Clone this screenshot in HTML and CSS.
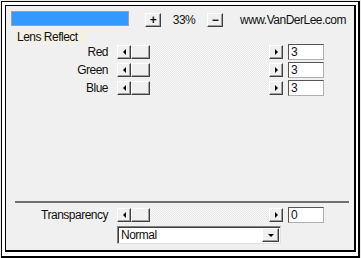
FILE: index.html
```html
<!DOCTYPE html>
<html lang="en">
<head>
    <meta charset="UTF-8">
    <title>Lens Reflect</title>
    <link rel="stylesheet" href="styles.css">
</head>
<body>

<div class="frame">
    <div class="panel">
        <!-- Preview bar -->
        <div class="topbar">
            <div class="progress"></div>
            <div class="btn btn-zoom btn-plus">+</div>
            <span class="zoom-value">33%</span>
            <div class="btn btn-zoom">&minus;</div>
            <span class="site">www.VanDerLee.com</span>
        </div>

        <!-- Lens Reflect group -->
        <div class="group">
            <div class="group-title">Lens Reflect</div>

            <div class="row">
                <span class="row-label">Red</span>
                <div class="slider">
                    <div class="btn arrow-btn"><span class="arrow-left"></span></div>
                    <div class="btn thumb"></div>
                    <div class="track"></div>
                    <div class="btn arrow-btn"><span class="arrow-right"></span></div>
                </div>
                <div class="value">3</div>
            </div>

            <div class="row">
                <span class="row-label">Green</span>
                <div class="slider">
                    <div class="btn arrow-btn"><span class="arrow-left"></span></div>
                    <div class="btn thumb"></div>
                    <div class="track"></div>
                    <div class="btn arrow-btn"><span class="arrow-right"></span></div>
                </div>
                <div class="value">3</div>
            </div>

            <div class="row">
                <span class="row-label">Blue</span>
                <div class="slider">
                    <div class="btn arrow-btn"><span class="arrow-left"></span></div>
                    <div class="btn thumb"></div>
                    <div class="track"></div>
                    <div class="btn arrow-btn"><span class="arrow-right"></span></div>
                </div>
                <div class="value">3</div>
            </div>
        </div>

        <div class="separator"></div>

        <!-- Blending -->
        <div class="row row-bottom">
            <span class="row-label">Transparency</span>
            <div class="slider">
                <div class="btn arrow-btn"><span class="arrow-left"></span></div>
                <div class="btn thumb"></div>
                <div class="track"></div>
                <div class="btn arrow-btn"><span class="arrow-right"></span></div>
            </div>
            <div class="value">0</div>
        </div>

        <div class="select">
            <span class="select-text">Normal</span>
            <div class="btn drop-btn"><span class="arrow-down"></span></div>
        </div>
    </div>
</div>

</body>
</html>
```

FILE: styles.css
```css
/* Global Styling */
body {
    margin: 0;
    padding: 1px 0 0 1px;
    background-color: #ececec;
    font-family: 'Liberation Sans', Arial, sans-serif;
    font-size: 12px;
    letter-spacing: -0.5px;
    color: #111;
}

/* Outer frame */
.frame {
    box-sizing: border-box;
    width: 359px;
    height: 257px;
    padding: 3px 2px 4px 3px;
    background-color: #fff;
    border: 1px solid #000;
    border-right-width: 2px;
    border-bottom-width: 2px;
}

/* Dialog panel */
.panel {
    box-sizing: border-box;
    width: 351px;
    height: 247px;
    padding-top: 5px;
    background-color: #f0f0f0;
    border: 1px solid #000;
    border-right-width: 2px;
    border-bottom-width: 2px;
}

/* 3D buttons */
.btn {
    box-sizing: border-box;
    display: flex;
    justify-content: center;
    align-items: center;
    background-color: #f0f0f0;
    border: 1px solid;
    border-color: #fff #404040 #404040 #fff;
    box-shadow: inset -1px -1px 0 #a0a0a0;
}

/* Top bar */
.topbar {
    display: flex;
    align-items: flex-start;
    height: 16px;
    margin-left: 5px;
}

.progress {
    box-sizing: border-box;
    width: 118px;
    height: 15px;
    border: 1px solid #a0a0a0;
    background-color: #3399ff;
}

.btn-zoom {
    width: 16px;
    height: 14px;
    margin-top: 2px;
    font-weight: bold;
    font-size: 12px;
    line-height: 12px;
}

.btn-plus {
    margin-left: 16px;
}

.zoom-value {
    width: 46px;
    text-align: center;
    line-height: 16px;
    margin-top: 1px;
}

.site {
    margin-left: 17px;
    line-height: 16px;
    margin-top: 1px;
}

/* Group */
.group {
    height: 169px;
    margin: 3px 0 0 4px;
}

.group-title {
    display: inline-block;
    height: 12px;
    line-height: 13px;
    margin-left: 5px;
    padding: 0 9px 0 2px;
    background-color: #f4f0e4;
}

/* Slider rows */
.row {
    display: flex;
    align-items: center;
    height: 16px;
    margin-top: 2px;
}

.group-title + .row {
    margin-top: 0;
}

.row-label {
    width: 98px;
    margin-right: 9px;
    text-align: right;
    line-height: 16px;
}

.slider {
    display: flex;
    width: 166px;
    height: 14px;
    margin-right: 5px;
}

.arrow-btn {
    width: 14px;
    height: 14px;
}

.thumb {
    width: 19px;
    height: 14px;
}

.track {
    flex: 1;
    background: repeating-conic-gradient(#fafafa 0 25%, #e6e6e6 0 50%) 0 0 / 2px 2px;
}

.arrow-left {
    width: 0;
    height: 0;
    border-top: 3px solid transparent;
    border-bottom: 3px solid transparent;
    border-right: 3px solid #000;
}

.arrow-right {
    width: 0;
    height: 0;
    border-top: 3px solid transparent;
    border-bottom: 3px solid transparent;
    border-left: 3px solid #000;
}

.value {
    box-sizing: border-box;
    width: 36px;
    height: 16px;
    padding-left: 2px;
    line-height: 14px;
    background-color: #fff;
    border: 1px solid;
    border-color: #555 #b0b0b0 #b0b0b0 #555;
}

/* Separator */
.separator {
    width: 334px;
    height: 2px;
    margin: 2px 0 0 9px;
    background-color: #707070;
}

.row-bottom {
    margin: 4px 0 0 4px;
}

/* Blend mode select */
.select {
    box-sizing: border-box;
    display: flex;
    align-items: center;
    justify-content: space-between;
    width: 164px;
    height: 18px;
    margin: 3px 0 0 111px;
    padding: 1px;
    background-color: #fff;
    border: 1px solid;
    border-color: #808080 #e0e0e0 #e0e0e0 #808080;
    box-shadow: inset 1px 1px 0 #404040;
}

.select-text {
    padding-left: 2px;
    line-height: 14px;
}

.drop-btn {
    width: 17px;
    height: 14px;
}

.arrow-down {
    width: 0;
    height: 0;
    border-left: 3px solid transparent;
    border-right: 3px solid transparent;
    border-top: 3px solid #000;
}
```
